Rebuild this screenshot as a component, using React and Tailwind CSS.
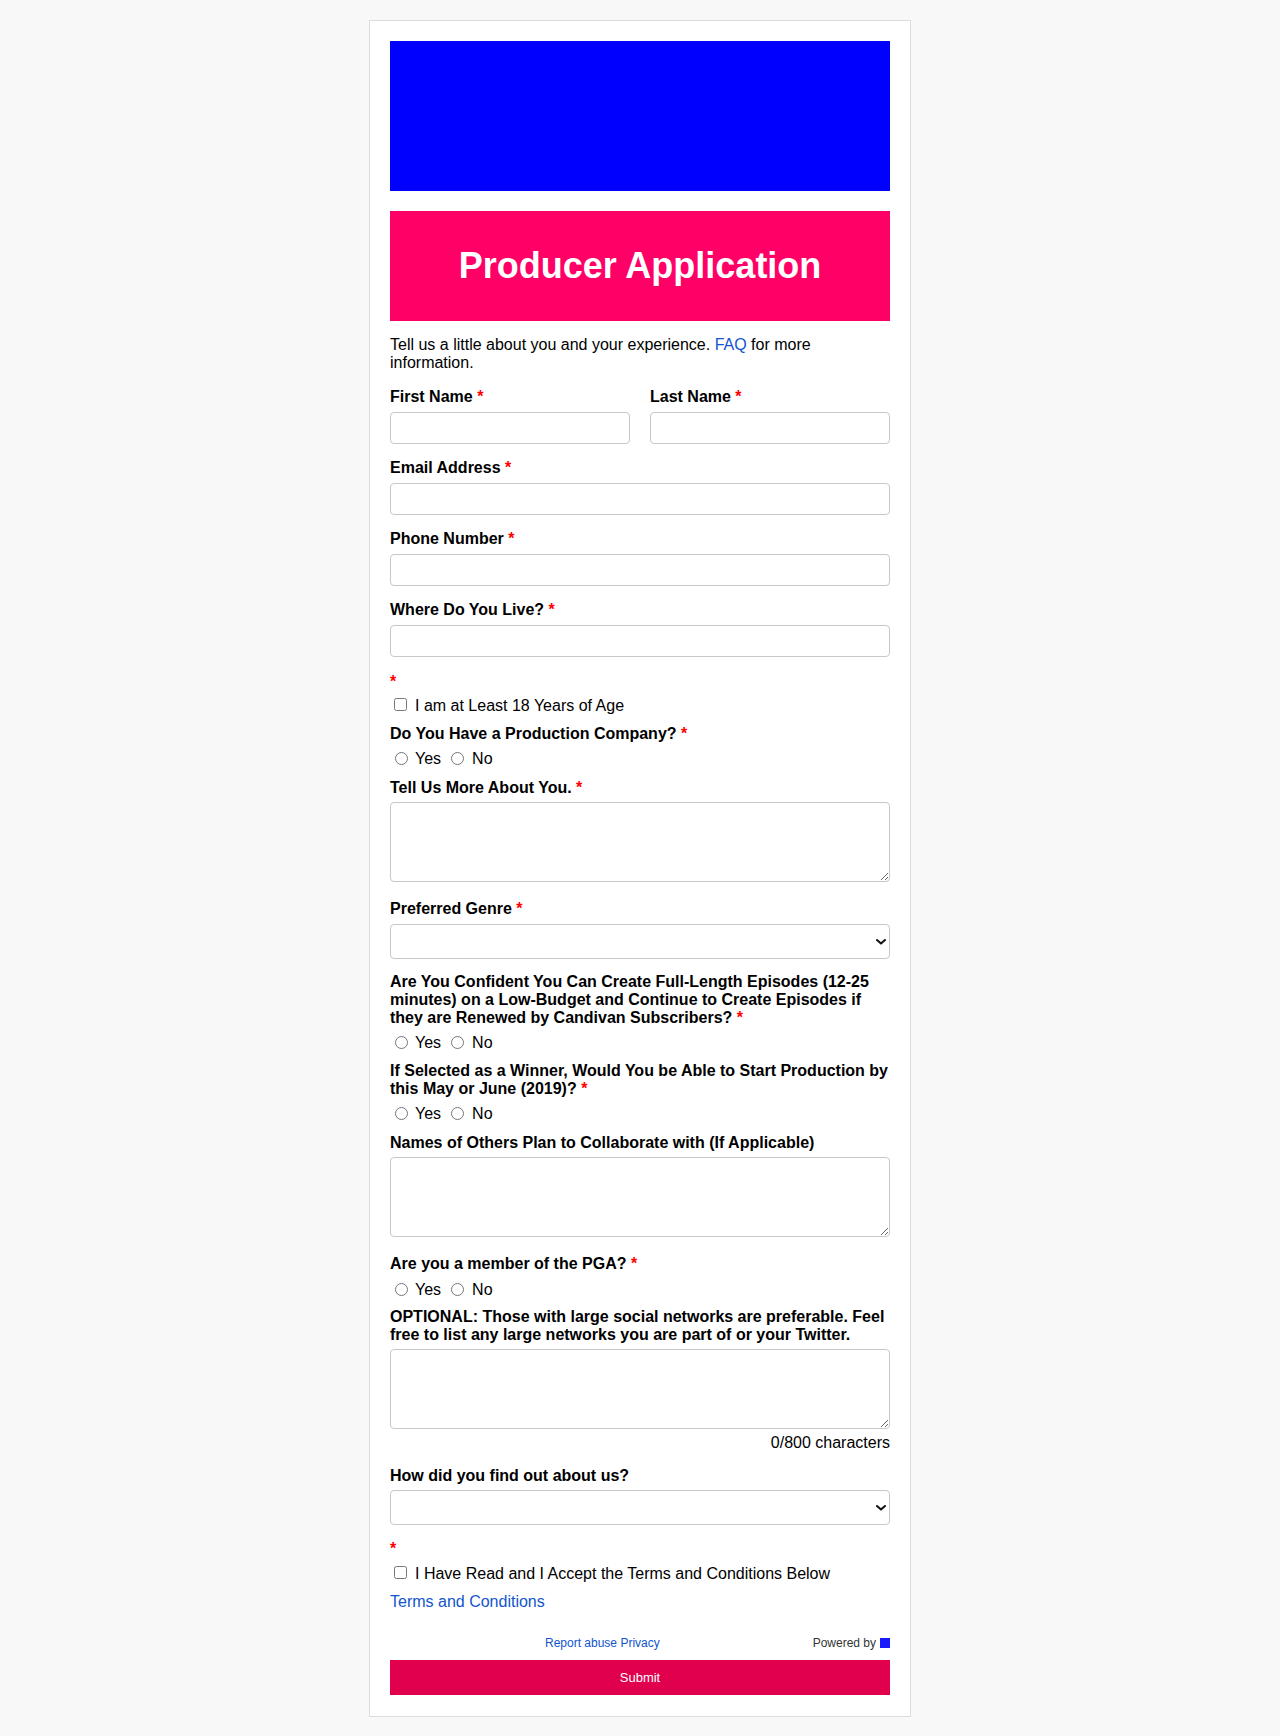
import React from 'react';

const font = { fontFamily: '"Liberation Sans", Arial, sans-serif' };

const Star = () => <span className="text-[#ff0000]"> *</span>;

// labels sit a pixel lower in the reference than Liberation puts them
const Label = ({ children, required, className = '' }) => (
  <div className={`pt-px -mb-px text-[16px] leading-[18px] font-bold text-black ${className}`}>
    {children}
    {required && <Star />}
  </div>
);

const TextInput = ({ className = '' }) => (
  <input
    type="text"
    className={`block w-full h-[32px] border border-[#c8c8c8] rounded-[4px] bg-white px-2 ${className}`}
  />
);

const TextArea = ({ className = '' }) => (
  <textarea
    className={`block w-full h-[80px] border border-[#c8c8c8] rounded-[4px] bg-white px-2 py-1 ${className}`}
  />
);

const Select = ({ className = '' }) => (
  <div className={`relative ${className}`}>
    <select className="block w-full h-[35px] appearance-none border border-[#c8c8c8] rounded-[4px] bg-white px-2">
      <option value=""></option>
    </select>
    <svg
      className="absolute right-[4px] top-[15px] pointer-events-none"
      width="10"
      height="6"
      viewBox="0 0 10 6"
    >
      <polyline points="1,1 5,4.6 9,1" fill="none" stroke="#111" strokeWidth="2" strokeLinecap="round" strokeLinejoin="round" />
    </svg>
  </div>
);

const YesNo = ({ name, className = '' }) => (
  <div className={`flex items-center h-[18px] text-[16px] leading-[18px] text-black ${className}`}>
    <input type="radio" name={name} className="w-[13px] h-[13px] ml-[5px] mr-[7px] mt-px" />
    <span className="pt-[2px]">Yes</span>
    <input type="radio" name={name} className="w-[13px] h-[13px] ml-[10px] mr-[8px] mt-px" />
    <span className="pt-[2px]">No</span>
  </div>
);

const CheckRow = ({ children, className = '' }) => (
  <div className={`flex items-center h-[18px] text-[16px] leading-[18px] text-black ${className}`}>
    <input type="checkbox" className="w-[13px] h-[13px] ml-[4px] mr-[8px] mt-px" />
    <span className="pt-[3px]">{children}</span>
  </div>
);

const StarLine = ({ className = '' }) => (
  <div className={`h-[18px] pt-[2px] text-[16px] leading-[18px] font-bold text-[#ff0000] ${className}`}>*</div>
);

export default function App() {
  return (
    <div className="min-h-screen bg-[#f8f8f8] pt-[20px] pb-[20px]" style={font}>
      <div className="w-[542px] mx-auto bg-white border border-[#dcdcdc] px-[20px] pt-[20px] pb-[21px]">
        <div className="h-[150px] bg-[#0000ff]" />
        <div className="mt-[20px] h-[110px] bg-[#ff0066] flex items-center justify-center">
          <h1 className="text-white font-bold text-[36px] leading-[40px]">Producer Application</h1>
        </div>

        <p className="mt-[13px] pt-[2px] -mb-[2px] text-[16px] leading-[18px] text-black">
          Tell us a little about you and your experience.{' '}
          <a href="#" className="text-[#1155cc]">FAQ</a> for more information.
        </p>

        <div className="mt-[17px] grid grid-cols-2 gap-x-[20px]">
          <div>
            <Label required>First Name</Label>
            <TextInput className="mt-[7px]" />
          </div>
          <div>
            <Label required>Last Name</Label>
            <TextInput className="mt-[7px]" />
          </div>
        </div>

        <Label required className="mt-[14px]">Email Address</Label>
        <TextInput className="mt-[7px]" />

        <Label required className="mt-[14px]">Phone Number</Label>
        <TextInput className="mt-[7px]" />

        <Label required className="mt-[14px]">Where Do You Live?</Label>
        <TextInput className="mt-[7px]" />

        <StarLine className="mt-[14px]" />
        <CheckRow className="mt-[6px]">I am at Least 18 Years of Age</CheckRow>

        <Label required className="mt-[11px]">Do You Have a Production Company?</Label>
        <YesNo name="company" className="mt-[7px]" />

        <Label required className="mt-[11px]">Tell Us More About You.</Label>
        <TextArea className="mt-[6px]" />

        <Label required className="mt-[17px]">Preferred Genre</Label>
        <Select className="mt-[7px]" />

        <Label required className="mt-[13px]">
          Are You Confident You Can Create Full-Length Episodes (12-25 minutes) on a Low-Budget and Continue to Create Episodes if they are Renewed by Candivan Subscribers?
        </Label>
        <YesNo name="confident" className="mt-[7px]" />

        <Label required className="mt-[10px]">
          If Selected as a Winner, Would You be Able to Start Production by this May or June (2019)?
        </Label>
        <YesNo name="winner" className="mt-[7px]" />

        <Label className="mt-[11px]">Names of Others Plan to Collaborate with (If Applicable)</Label>
        <TextArea className="mt-[6px]" />

        <Label required className="mt-[17px]">Are you a member of the PGA?</Label>
        <YesNo name="pga" className="mt-[8px]" />

        <Label className="mt-[9px]">
          OPTIONAL: Those with large social networks are preferable. Feel free to list any large networks you are part of or your Twitter.
        </Label>
        <TextArea className="mt-[6px]" />
        <div className="mt-[5px] -mb-px text-right text-[16px] leading-[18px] text-black">0/800 characters</div>

        <Label className="mt-[15px]">How did you find out about us?</Label>
        <Select className="mt-[6px]" />

        <StarLine className="mt-[13px]" />
        <CheckRow className="mt-[7px]">I Have Read and I Accept the Terms and Conditions Below</CheckRow>

        <div className="mt-[11px] pt-px -mb-px text-[16px] leading-[18px]">
          <a href="#" className="text-[#1155cc]">Terms and Conditions</a>
        </div>

        <div className="mt-[25px] flex items-center text-[12px] leading-[14px]">
          <div className="pl-[155px] flex-1 pt-px">
            <a href="#" className="text-[#1155cc]">Report abuse</a>{' '}
            <a href="#" className="text-[#1155cc]">Privacy</a>
          </div>
          <div className="flex items-center text-[#333] pt-px">
            <span>Powered by</span>
            <span className="ml-[4px] inline-block w-[10px] h-[10px] bg-[#1a1aff]" />
          </div>
        </div>

        <button className="mt-[10px] block w-full h-[35px] bg-[#e0004d] text-white text-[13px]">
          Submit
        </button>
      </div>
    </div>
  );
}
